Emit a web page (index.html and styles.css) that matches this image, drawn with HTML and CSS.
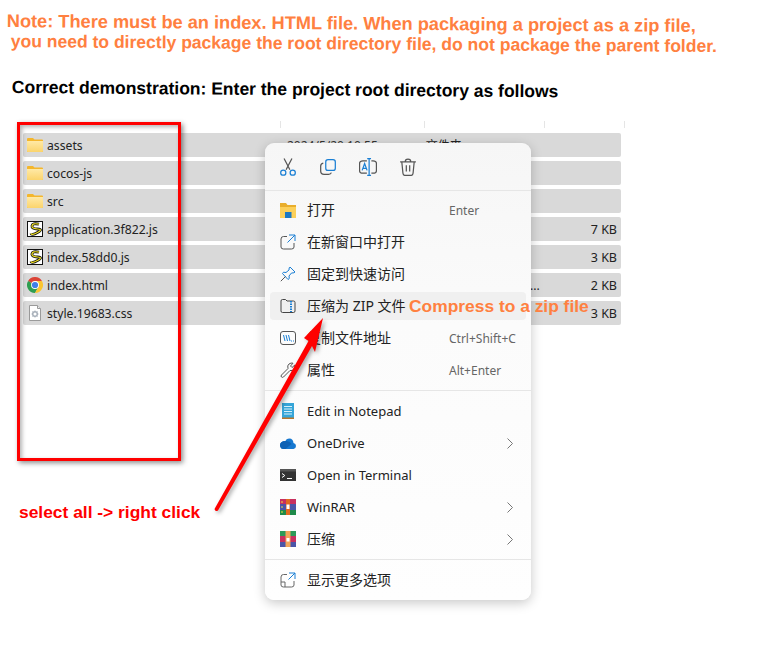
FILE: index.html
```html
<!DOCTYPE html>
<html lang="en">
<head>
    <meta charset="UTF-8">
    <title>Packaging note</title>
    <link rel="stylesheet" href="styles.css">
</head>
<body>
    <svg class="defs" width="0" height="0">
        <defs>
            <linearGradient id="folder-body" x1="0" y1="0" x2="0" y2="1">
                <stop offset="0" stop-color="#ffe9a6"/>
                <stop offset="1" stop-color="#fbd46c"/>
            </linearGradient>
            <symbol id="folder" viewBox="0 0 16 16">
                <path d="M0 2q0-1 1-1h5l1.500 1.500H15q1 0 1 1V14q0 1-1 1H1q-1 0-1-1z" fill="#f4b62c"/>
                <path d="M0 4h16v10q0 1-1 1H1q-1 0-1-1z" fill="url(#folder-body)"/>
            </symbol>
            <symbol id="script" viewBox="0 0 16 16">
                <rect x=".5" y=".5" width="15" height="15" fill="#fff" stroke="#111"/>
                <path d="M12 3.200Q5.500 1.800 5 4.800T10.500 8 10.500 11.500 4 12.500" fill="none" stroke="#111" stroke-width="2.800"/>
                <path d="M12 3.200Q5.500 1.800 5 4.800T10.500 8 10.500 11.500 4 12.500" fill="none" stroke="#f0e020" stroke-width="1.200"/>
            </symbol>
            <symbol id="chevron" viewBox="0 0 6 11">
                <path d="M.5.500l5 5-5 5" fill="none" stroke="#777"/>
            </symbol>
        </defs>
    </svg>

    <div class="note">
        <p class="note-first">Note: There must be an index. HTML file. When packaging a project as a zip file,</p>
        <p class="note-second">you need to directly package the root directory file, do not package the parent folder.</p>
    </div>
    <h2 class="demo">Correct demonstration: Enter the project root directory as follows</h2>

    <div class="ticks">
        <span></span><span></span><span></span><span></span>
    </div>

    <div class="files">
        <div class="file-row">
            <svg class="file-icon"><use href="#folder"/></svg>
            <span class="file-name">assets</span>
            <span class="file-date">2024/5/20 10:55</span>
            <span class="file-type">文件夹</span>
        </div>
        <div class="file-row">
            <svg class="file-icon"><use href="#folder"/></svg>
            <span class="file-name">cocos-js</span>
        </div>
        <div class="file-row">
            <svg class="file-icon"><use href="#folder"/></svg>
            <span class="file-name">src</span>
        </div>
        <div class="file-row">
            <svg class="file-icon"><use href="#script"/></svg>
            <span class="file-name">application.3f822.js</span>
            <span class="file-size">7 KB</span>
        </div>
        <div class="file-row">
            <svg class="file-icon"><use href="#script"/></svg>
            <span class="file-name">index.58dd0.js</span>
            <span class="file-size">3 KB</span>
        </div>
        <div class="file-row">
            <svg class="file-icon" viewBox="0 0 16 16">
                <path d="M8 8 1.070 4A8 8 0 0 1 14.930 4H8z" fill="#db4437"/>
                <path d="M8 8 1.070 4A8 8 0 0 0 8 16l3.460-6z" fill="#2f9e50"/>
                <path d="M8 4h6.930A8 8 0 0 1 8 16l3.460-6A4 4 0 0 0 8 4z" fill="#fbc531"/>
                <circle cx="8" cy="8" r="3.900" fill="#fff"/>
                <circle cx="8" cy="8" r="3.100" fill="#3f7fe8"/>
            </svg>
            <span class="file-name">index.html</span>
            <span class="file-dots">...</span>
            <span class="file-size">2 KB</span>
        </div>
        <div class="file-row">
            <svg class="file-icon" viewBox="0 0 16 16">
                <path d="M2.500.500h8l3 3v12h-11z" fill="#fff" stroke="#9a9a9a"/>
                <path d="M10.500.500v3h3" fill="#eee" stroke="#9a9a9a"/>
                <circle cx="8" cy="9" r="2.300" fill="none" stroke="#a8b0ba" stroke-width="1.500"/>
                <path d="M8 5.500v1.200M8 11.300v1.200M4.500 9h1.200M10.300 9h1.200M5.500 6.500l.9.900M9.600 10.600l.9.900M5.500 11.500l.9-.9M9.600 7.400l.9-.9" stroke="#a8b0ba"/>
            </svg>
            <span class="file-name">style.19683.css</span>
            <span class="file-size">3 KB</span>
        </div>
    </div>

    <!-- selection box -->
    <div class="select-box"></div>

    <!-- context menu -->
    <div class="menu">
        <div class="menu-tools">
            <svg class="tool" viewBox="0 0 16 16" fill="none" stroke="#555" stroke-width="1.100">
                <path d="M4.500.500l5.200 10M11.500.500 6.300 10.500"/>
                <circle cx="3.800" cy="13" r="2.300" stroke="#1a7fd4"/>
                <circle cx="12.200" cy="13" r="2.300" stroke="#1a7fd4"/>
            </svg>
            <svg class="tool" viewBox="0 0 16 16" fill="none" stroke="#1a7fd4" stroke-width="1.100">
                <rect x="6" y="1.500" width="8.500" height="9.500" rx="2"/>
                <path d="M3.800 4.500Q1.500 5 1.500 7v4.500q0 3 3 3h4q2 0 2.500-1.500" stroke="#555"/>
            </svg>
            <svg class="tool" viewBox="0 0 16 16" fill="none" stroke="#555" stroke-width="1.100">
                <path d="M7 2.500H3.500Q.5 2.500.5 5v6q0 2.500 3 2.500H7M11 2.500h1.500q3 0 3 2.500v6q0 2.500-3 2.500H11"/>
                <path d="M9 .5v15M7.300.5h3.400M7.300 15.500h3.400" stroke="#1a7fd4"/>
                <path d="M2.800 11 5 5l2.200 6M3.500 9.200h3" stroke="#1a7fd4"/>
            </svg>
            <svg class="tool" viewBox="0 0 16 16" fill="none" stroke="#555" stroke-width="1.100">
                <path d="M1 3.500h14M5.500 3.500q0-2.500 2.500-2.500t2.500 2.500M2.500 3.500l1 10q.2 2 2 2h5q1.800 0 2-2l1-10M6.500 6.500v5.500M9.500 6.500v5.500"/>
            </svg>
        </div>
        <div class="menu-group">
            <div class="menu-item">
                <svg class="menu-icon" viewBox="0 0 16 16"><path d="M0 1h6l1.500 2H16v13H0z" fill="#e9ae2c"/><path d="M0 5h16v11H0z" fill="#fcd05a"/><path d="M5 10h6.500v6H5z" fill="#1c78c4"/></svg>
                <span class="item-label cjk">打开</span><span class="item-key">Enter</span>
            </div>
            <div class="menu-item">
                <svg class="menu-icon" viewBox="0 0 16 16" fill="none" stroke="#555"><path d="M7 2.500H3.500Q1 2.500 1 5v8q0 2 2.500 2h8q2.500 0 2.500-2V9"/><path d="M9 1h6v6M15 1 7.500 8.500" stroke="#1a7fd4"/></svg>
                <span class="item-label cjk">在新窗口中打开</span>
            </div>
            <div class="menu-item">
                <svg class="menu-icon" viewBox="0 0 16 16" fill="none" stroke="#1a7fd4"><path d="M10 1l5 5-1 .8-2.500.2-2.500 3 .3 2.500-1.300 1L2.500 7.500l1-1.300L6 6.500l3-2.500.2-2.200z"/><path d="M5.500 10.500.8 15.200" stroke="#555"/></svg>
                <span class="item-label cjk">固定到快速访问</span>
            </div>
            <div class="menu-item hovered">
                <svg class="menu-icon" viewBox="0 0 16 16" fill="none" stroke="#444"><path d="M1 13V3q0-1.500 1.500-1.500h3L7 3h6.500Q15 3 15 4.500V13q0 1.500-1.500 1.500h-11Q1 14.500 1 13z"/><path d="M11 3v11" stroke="#1a7fd4" stroke-width="2" stroke-dasharray="1.500 1"/></svg>
                <span class="item-label cjk">压缩为 ZIP 文件</span>
            </div>
            <div class="menu-item">
                <svg class="menu-icon" viewBox="0 0 16 16" fill="none" stroke="#555"><rect x=".5" y="1.500" width="15" height="13" rx="2.500"/><path d="M3.500 5l1.500 6M6 5l1.500 6M8.500 5l1.500 6" stroke="#1a7fd4"/><path d="M11 11h1M13 11h1" stroke="#1a7fd4"/></svg>
                <span class="item-label cjk">复制文件地址</span><span class="item-key">Ctrl+Shift+C</span>
            </div>
            <div class="menu-item">
                <svg class="menu-icon" viewBox="0 0 16 16" fill="none" stroke="#555"><path d="M1.500 13 8 6.500Q7 3.500 9 2t4-.8L10.500 4l1.500 1.500 2.800-2.500q.8 2.500-.8 4.300T10 8.500L3.500 15q-1 .8-2 0t0-2z"/></svg>
                <span class="item-label cjk">属性</span><span class="item-key">Alt+Enter</span>
            </div>
        </div>
        <div class="menu-group">
            <div class="menu-item">
                <svg class="menu-icon" viewBox="0 0 16 16"><rect x="2" y="0" width="12" height="16" fill="#35a5d8"/><path d="M2 14.500h12V16H2z" fill="#b9762a"/><path d="M4 3.500h8M4 6h8M4 8.500h8M4 11h8" stroke="#d6f0fa"/></svg>
                <span class="item-label">Edit in Notepad</span>
            </div>
            <div class="menu-item">
                <svg class="menu-icon" viewBox="0 0 16 16"><path d="M3.500 14h10Q16 13.500 16 11t-2.500-3Q13 3.500 9.500 3.500T5.500 6Q0 6 0 10.500 .5 14 3.500 14z" fill="#1678d0"/><path d="M5.500 6q4 0 6 3l-6 5H3.500Q.5 14 0 10.500 0 6 5.500 6z" fill="#0f62b4"/></svg>
                <span class="item-label">OneDrive</span><svg class="item-more"><use href="#chevron"/></svg>
            </div>
            <div class="menu-item">
                <svg class="menu-icon" viewBox="0 0 16 16"><rect y="2" width="16" height="12" fill="#333"/><rect y="2" width="16" height="2.500" fill="#555"/><path d="M2 6.500 4.800 8.500 2 10.500" fill="none" stroke="#fff"/><path d="M7 11.500h5" stroke="#fff"/></svg>
                <span class="item-label">Open in Terminal</span>
            </div>
            <div class="menu-item">
                <svg class="menu-icon" viewBox="0 0 16 16"><rect width="16" height="5" fill="#c8305f"/><rect y="5" width="16" height="6" fill="#4b55a8"/><rect y="11" width="16" height="5" fill="#1f8a4a"/><rect x="6" width="4" height="16" fill="#e06a20"/><rect x="6.500" y="5.500" width="3" height="4.500" fill="#fff"/><path d="M2 2v2M2 7v2M2 12v2" stroke="#f0e040"/></svg>
                <span class="item-label">WinRAR</span><svg class="item-more"><use href="#chevron"/></svg>
            </div>
            <div class="menu-item">
                <svg class="menu-icon" viewBox="0 0 16 16"><rect width="16" height="5" fill="#2c9a58"/><rect y="5" width="16" height="6" fill="#c8305f"/><rect y="11" width="16" height="5" fill="#4b55a8"/><rect x="5.500" width="5" height="16" fill="#f2a65a"/><rect x="6.500" y="7" width="3" height="3.500" fill="#fff"/></svg>
                <span class="item-label cjk">压缩</span><svg class="item-more"><use href="#chevron"/></svg>
            </div>
        </div>
        <div class="menu-group">
            <div class="menu-item">
                <svg class="menu-icon" viewBox="0 0 16 16" fill="none" stroke="#666"><path d="M7 2.500H3.500Q1 2.500 1 5v8q0 2 2.500 2H5V10H1M5 15h6.500q2.500 0 2.500-2V9"/><path d="M9 1h6v6M15 1 8.500 7.500" stroke="#1a7fd4"/></svg>
                <span class="item-label cjk">显示更多选项</span>
            </div>
        </div>
    </div>

    <!-- annotations drawn on top of the screenshot -->
    <span class="callout">Compress to a zip file</span>
    <span class="hint">select all -&gt; right click</span>
    <svg class="arrow" viewBox="0 0 767 660">
        <path d="M323 318 304 338 308.500 341 214.500 509Q215 512 218 510.500L312 346 315 352z" fill="#f00"/>
    </svg>
</body>
</html>
```

FILE: styles.css
```css
body {
    margin: 0;
    height: 660px;
    overflow: hidden;
    position: relative;
    background-color: #fff;
    font-family: "Noto Sans", "Noto Sans CJK SC", sans-serif;
    color: #222;
}
.defs {
    position: absolute;
}
.note {
    padding: 11px 0 0 7px;
    font-family: "Liberation Sans", sans-serif;
    font-weight: bold;
    line-height: 20px;
    color: #ff8040;
    transform: rotate(0.4deg);
    transform-origin: 0 0;
}
.note p {
    margin: 0;
    white-space: nowrap;
}
.note-first {
    font-size: 18.200px;
}
.note-second {
    padding-left: 4px;
    font-size: 17.550px;
}
.demo {
    margin: 26px 0 0 12px;
    font-family: "Liberation Sans", sans-serif;
    font-size: 17.500px;
    line-height: 20px;
    font-weight: bold;
    color: #000;
    transform: rotate(0.45deg);
    transform-origin: 0 0;
}

.ticks {
    display: flex;
    margin: 24px 0 0 280px;
    height: 7px;
}
.ticks span {
    width: 1px;
    height: 7px;
    background-color: #e5e5e5;
}
.ticks span:nth-child(1) { margin-right: 143px; }
.ticks span:nth-child(2) { margin-right: 119px; }
.ticks span:nth-child(3) { margin-right: 79px; }

.files {
    margin: 5px 0 0 23px;
    width: 598px;
    display: flex;
    flex-direction: column;
    gap: 4px;
}
.file-row {
    height: 24px;
    display: flex;
    align-items: center;
    background-color: #d9d9d9;
    border-radius: 2px;
    padding: 0 4px;
    font-size: 12.200px;
    color: #222;
}
.file-icon {
    width: 16px;
    height: 16px;
    margin-right: 4px;
}
.file-name {
    width: 240px;
}
.file-date {
    color: #333;
    font-size: 12px;
}
.file-type {
    margin-left: 48px;
    font-size: 12px;
}
.file-dots {
    margin-left: 243px;
}
.file-size {
    margin-left: auto;
    font-size: 12.500px;
}

.select-box {
    position: absolute;
    left: 17px;
    top: 122px;
    width: 158px;
    height: 333px;
    border: 3px solid #f00;
    box-shadow: 2px 2px 5px rgba(0, 0, 0, 0.45), inset 2px 2px 4px rgba(0, 0, 0, 0.3);
}

.menu {
    position: absolute;
    left: 265px;
    top: 143px;
    width: 266px;
    height: 457px;
    box-sizing: border-box;
    border-radius: 9px;
    background: linear-gradient(#f6f6f6, #fbfbfb 40%, #fefefe);
    box-shadow: 0 3px 12px rgba(0, 0, 0, 0.22);
}
.menu-tools {
    height: 47px;
    display: flex;
    align-items: center;
    gap: 22px;
    padding-left: 14px;
    border-bottom: 1px solid #e6e6e6;
}
.tool {
    width: 18px;
    height: 18px;
}
.menu-group {
    padding: 4px 5px;
    border-bottom: 1px solid #e6e6e6;
}
.menu-group:nth-child(2) {
    padding-top: 3px;
}
.menu-group:last-child {
    border-bottom: none;
}
.menu-item {
    height: 32px;
    display: flex;
    align-items: center;
    padding: 0 10px;
    font-size: 13px;
    color: #222;
    border-radius: 4px;
}
.menu-item.hovered {
    height: 28px;
    margin: 2px 0;
    background-color: #f0f0f0;
}
.menu-icon {
    width: 16px;
    height: 16px;
    margin-right: 11px;
}
.item-label {
    flex: 1;
    white-space: nowrap;
}
.item-label.cjk {
    font-size: 14px;
    line-height: 16px;
}
.item-key {
    font-size: 12px;
    color: #666;
    width: 67px;
    white-space: nowrap;
}
.item-more {
    width: 6px;
    height: 11px;
    margin-right: 3px;
}

.callout {
    position: absolute;
    left: 409px;
    top: 296px;
    font-family: "Liberation Sans", sans-serif;
    font-weight: bold;
    font-size: 17.400px;
    color: #ff8040;
}
.hint {
    position: absolute;
    left: 19px;
    top: 502px;
    font-family: "Liberation Sans", sans-serif;
    font-weight: bold;
    font-size: 17.400px;
    color: #f00;
}
.arrow {
    position: absolute;
    left: 0;
    top: 0;
    width: 767px;
    height: 660px;
    pointer-events: none;
    filter: drop-shadow(2px 2px 2px rgba(0, 0, 0, 0.35));
}
```
